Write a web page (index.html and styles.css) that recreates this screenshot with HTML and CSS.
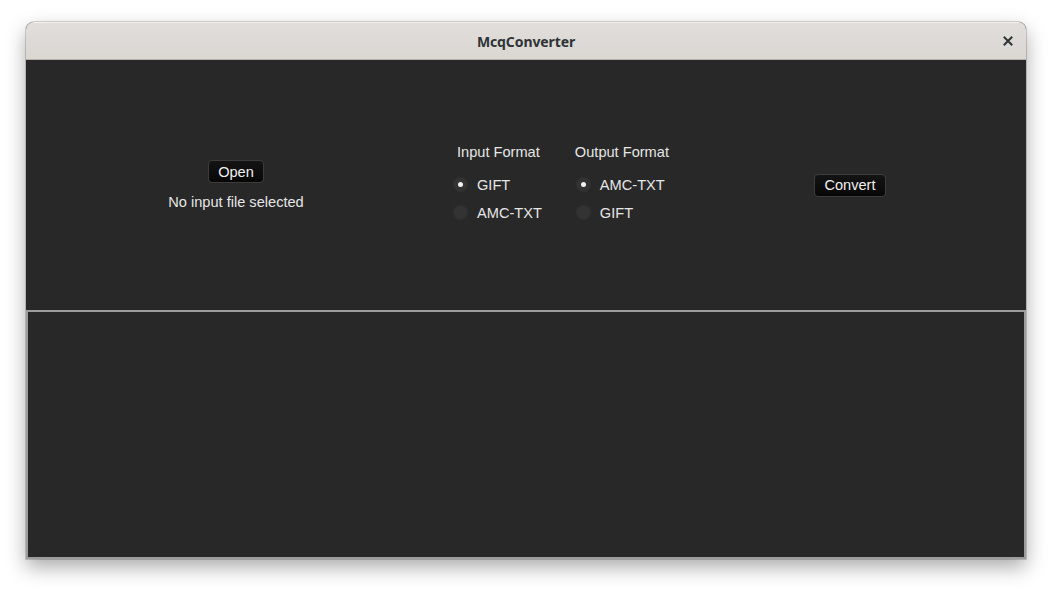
FILE: index.html
```html
<!DOCTYPE html>
<html>
<head>
<meta charset="utf-8">
<link rel="stylesheet" href="styles.css">
</head>
<body>
<div class="window">
  <div class="titlebar">
    <span class="title">McqConverter</span>
    <span class="close">
      <svg width="10" height="10" viewBox="0 0 10 10"><path d="M1.5 1.5 L8.5 8.5 M8.5 1.5 L1.5 8.5" stroke="#2e3436" stroke-width="2" stroke-linecap="square"/></svg>
    </span>
  </div>
  <div class="top">
    <div class="col col-open">
      <button class="btn">Open</button>
      <div class="label">No input file selected</div>
    </div>
    <div class="col col-formats">
      <div class="fmt fmt-in">
        <div class="heading">Input Format</div>
        <div class="radio checked"><span class="dot"></span><span>GIFT</span></div>
        <div class="radio"><span class="dot"></span><span>AMC-TXT</span></div>
      </div>
      <div class="fmt fmt-out">
        <div class="heading">Output Format</div>
        <div class="radio checked"><span class="dot"></span><span>AMC-TXT</span></div>
        <div class="radio"><span class="dot"></span><span>GIFT</span></div>
      </div>
    </div>
    <div class="col col-convert">
      <button class="btn">Convert</button>
    </div>
  </div>
  <div class="log"></div>
</div>
</body>
</html>
```

FILE: styles.css
```css
html, body {
  margin: 0;
  padding: 0;
  background: #ffffff;
}
body {
  min-height: 589px;
  box-sizing: border-box;
  padding: 22px 26px 0 26px;
  font-family: "Liberation Sans", Arial, sans-serif;
}
.window {
  width: 1000px;
  height: 537px;
  display: flex;
  flex-direction: column;
  border-radius: 8px 8px 0 0;
  background: #282828;
  box-shadow: 0 8px 20px rgba(0,0,0,0.34), 0 0 0 1px rgba(0,0,0,0.16);
  overflow: hidden;
}
.titlebar {
  height: 38px;
  flex: none;
  box-sizing: border-box;
  border-top: 1px solid #f4f2f0;
  border-bottom: 1px solid #b6b0aa;
  background: linear-gradient(#e1dedb, #dad6d2);
  display: flex;
  align-items: center;
  justify-content: center;
  position: relative;
}
.title {
  font-family: "Noto Sans", "DejaVu Sans", sans-serif;
  font-weight: bold;
  font-size: 14px;
  letter-spacing: -0.1px;
  color: #2e3436;
}
.close {
  position: absolute;
  right: 13px;
  top: 13px;
  width: 10px;
  height: 10px;
  display: flex;
}
.top {
  height: 250px;
  box-sizing: border-box;
  padding-bottom: 2px;
  flex: none;
  display: grid;
  grid-template-columns: 420px 228px 352px;
  align-items: center;
  color: #e6e6e6;
  font-size: 14.6px;
}
.col {
  display: flex;
  flex-direction: column;
  align-items: center;
}
.col-open {
  padding-top: 3px;
}
.col-open .label {
  margin-top: 10px;
  line-height: 18px;
}
.btn {
  font-family: "Liberation Sans", Arial, sans-serif;
  font-size: 14.6px;
  color: #f0f0f0;
  background: linear-gradient(#141414, #070707);
  border: 1px solid #3c3c3c;
  border-radius: 4px;
  height: 23px;
  padding: 0 9px;
  line-height: 20px;
}
.col-convert {
  padding-top: 2px;
}
.col-formats {
  flex-direction: row;
  align-items: flex-start;
  justify-content: flex-start;
  padding-left: 7px;
  gap: 33px;
  padding-top: 6px;
}
.fmt {
  display: flex;
  flex-direction: column;
}
.heading {
  line-height: 18px;
  margin-bottom: 15px;
  padding-left: 4px;
}
.fmt-out .heading {
  padding-left: 0;
}
.fmt-out .radio {
  padding-left: 1px;
}
.radio {
  display: flex;
  align-items: center;
  height: 28px;
  margin-top: -5px;
  margin-bottom: 5px;
}
.radio + .radio {
  margin-top: -5px;
}
.dot {
  width: 15px;
  height: 15px;
  border-radius: 50%;
  background: #333333;
  box-shadow: inset 0 0 0 1px #2f2f2f;
  margin-right: 9px;
  position: relative;
  flex: none;
}
.radio.checked .dot::after {
  content: "";
  position: absolute;
  left: 5px;
  top: 5px;
  width: 5px;
  height: 5px;
  border-radius: 50%;
  background: #f2f2f2;
}
.log {
  flex: 1;
  border: 2px solid #9c9c9c;
  background: #282828;
}
```
